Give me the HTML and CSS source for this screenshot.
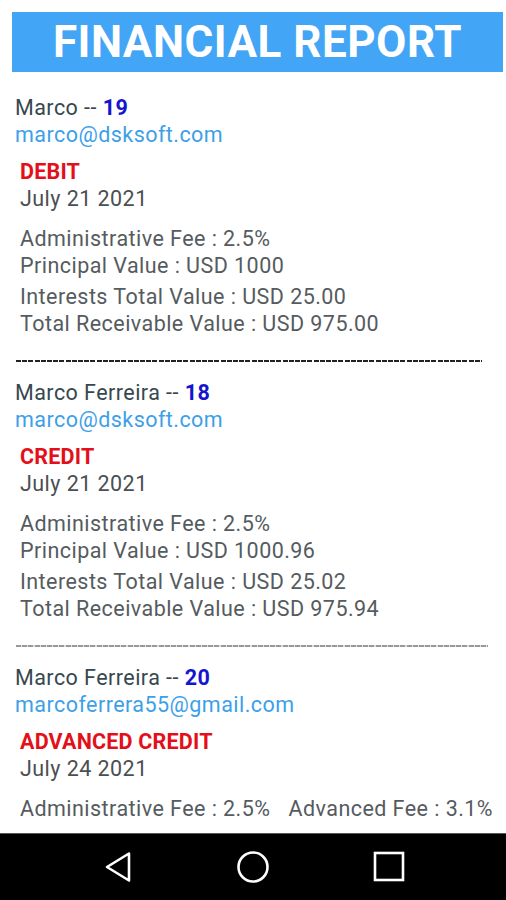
FILE: index.html
```html
<!DOCTYPE html>
<html lang="en">
<head>
  <meta charset="UTF-8">
  <meta name="viewport" content="width=device-width, initial-scale=1.0">
  <title>Financial Report</title>
  <link rel="stylesheet" href="styles.css">
</head>
<body>
  <div class="screen">
    <div class="report">
      <h1 class="title">FINANCIAL REPORT</h1>

      <div class="entry">
        <div class="name">Marco -- <span class="num">19</span></div>
        <div class="email">marco@dsksoft.com</div>
        <div class="kind">DEBIT</div>
        <div class="date">July 21 2021</div>
        <div class="fees">
          <div>Administrative Fee : 2.5%</div>
          <div>Principal Value : USD 1000</div>
        </div>
        <div class="values">
          <div>Interests Total Value : USD 25.00</div>
          <div>Total Receivable Value : USD 975.00</div>
        </div>
      </div>
      <div class="divider"></div>

      <div class="entry">
        <div class="name">Marco Ferreira -- <span class="num">18</span></div>
        <div class="email">marco@dsksoft.com</div>
        <div class="kind">CREDIT</div>
        <div class="date">July 21 2021</div>
        <div class="fees">
          <div>Administrative Fee : 2.5%</div>
          <div>Principal Value : USD 1000.96</div>
        </div>
        <div class="values">
          <div>Interests Total Value : USD 25.02</div>
          <div>Total Receivable Value : USD 975.94</div>
        </div>
      </div>
      <div class="divider light"></div>

      <div class="entry">
        <div class="name">Marco Ferreira -- <span class="num">20</span></div>
        <div class="email">marcoferrera55@gmail.com</div>
        <div class="kind">ADVANCED CREDIT</div>
        <div class="date">July 24 2021</div>
        <div class="fees">
          <div class="row"><span>Administrative Fee : 2.5%</span><span>Advanced Fee : 3.1%</span></div>
        </div>
      </div>
    </div>

    <nav class="navbar">
      <svg width="28" height="32" viewBox="0 0 28 32"><path d="M25 2.5 L3 16 L25 29.5 Z" fill="none" stroke="#fff" stroke-width="2.6" stroke-linejoin="round"/></svg>
      <svg width="34" height="34" viewBox="0 0 34 34"><circle cx="17" cy="17" r="14.5" fill="none" stroke="#fff" stroke-width="2.6"/></svg>
      <svg width="32" height="32" viewBox="0 0 32 32"><rect x="2" y="2" width="28" height="27" fill="none" stroke="#fff" stroke-width="2.6"/></svg>
    </nav>
  </div>
</body>
</html>
```

FILE: styles.css
```css
body {
  margin: 0;
  padding: 0;
  background-color: #fff;
  font-family: Roboto, 'Noto Sans', sans-serif;
}
.screen {
  width: 506px;
  height: 900px;
  display: flex;
  flex-direction: column;
  overflow: hidden;
}
.report {
  flex: 1;
  overflow: hidden;
  padding: 12px 3px 0 12px;
}
.title {
  margin: 0;
  height: 60px;
  background-color: #42a5f5;
  color: #fff;
  font-size: 44px;
  font-weight: 700;
  line-height: 60px;
  text-align: center;
  letter-spacing: 0.5px;
}
.entry {
  font-size: 21.5px;
  line-height: 27px;
  letter-spacing: 0.45px;
}
.entry:first-of-type {
  margin-top: 22px;
}
.name {
  padding-left: 3px;
  color: #37474f;
}
.num {
  color: #1515d0;
  font-weight: 700;
}
.email {
  padding-left: 3px;
  color: #3d9fe8;
}
.kind {
  margin-top: 10px;
  padding-left: 8px;
  color: #e3101a;
  font-weight: 700;
  letter-spacing: 0.2px;
}
.date {
  padding-left: 8px;
  color: #4a4f52;
}
.fees {
  margin-top: 13px;
  padding-left: 8px;
  color: #555b5e;
}
.values {
  margin-top: 4px;
  padding-left: 8px;
  color: #555b5e;
}
.row {
  display: flex;
  gap: 18px;
}
.divider {
  height: 2px;
  width: 466px;
  margin: 23px 0 17px 4px;
  background: repeating-linear-gradient(90deg, #222 0 5px, transparent 5px 6.2px);
}
.divider.light {
  width: 472px;
  background: repeating-linear-gradient(90deg, #999 0 5px, #ddd 5px 6.2px);
}
.navbar {
  height: 67px;
  flex-shrink: 0;
  background-color: #000;
  border-top: 1px solid #555;
  box-sizing: border-box;
  display: flex;
  align-items: center;
  justify-content: space-between;
  padding: 0 101px 0 104px;
}
```
